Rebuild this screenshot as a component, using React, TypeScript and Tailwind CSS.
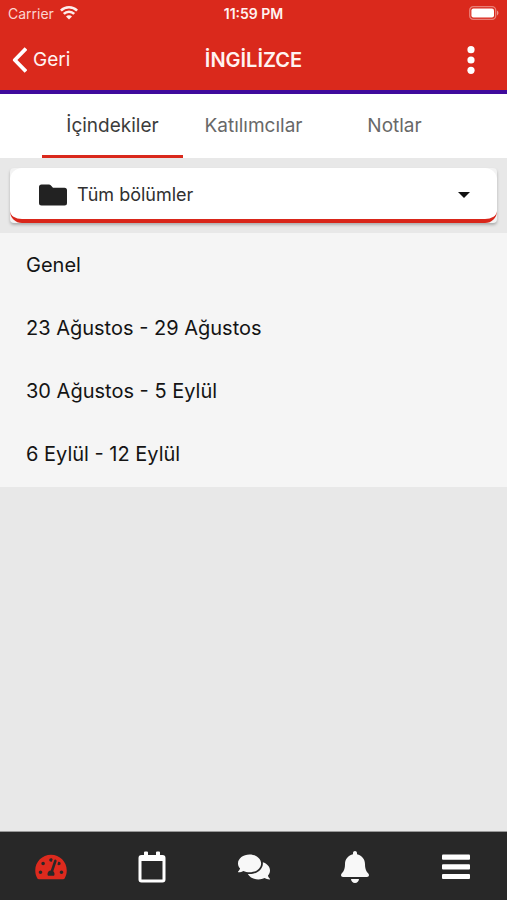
import { FaBell, FaComments, FaTachometerAlt } from "react-icons/fa";

const tabs = ["İçindekiler", "Katılımcılar", "Notlar"];

const sections = [
  "Genel",
  "23 Ağustos - 29 Ağustos",
  "30 Ağustos - 5 Eylül",
  "6 Eylül - 12 Eylül",
];

function WifiIcon() {
  return (
    <svg width="18" height="14" viewBox="0 0 18 14" fill="none" stroke="#fdeeec" strokeWidth="2.6" aria-hidden="true">
      <path d="M0.9 4.6a11.6 11.6 0 0 1 16.2 0" />
      <path d="M3.8 7.9a7.4 7.4 0 0 1 10.4 0" />
      <path d="M9 13.4 6 10.400a4.200 4.200 0 0 1 6 0Z" fill="#fdeeec" stroke="none" />
    </svg>
  );
}

function BatteryIcon() {
  return (
    <svg width="30" height="14" viewBox="0 0 30 14" aria-hidden="true">
      <rect x="0.7" y="0.7" width="26" height="12.6" rx="3.6" fill="none" stroke="#fff" strokeOpacity="0.4" strokeWidth="1.3" />
      <rect x="2.4" y="2.4" width="22.6" height="9.2" rx="2" fill="#fff" />
      <path d="M28 4.6c1.9.7 1.9 4.1 0 4.8Z" fill="#fff" fillOpacity="0.5" />
    </svg>
  );
}

function CalendarIcon() {
  return (
    <svg width="28" height="32" viewBox="0 0 28 32" fill="#fff" aria-hidden="true">
      <path
        fillRule="evenodd"
        d="M6 1.5Q6 .5 7 .5h2q1 0 1 1V4h8V1.5q0-1 1-1h2q1 0 1 1V4h2.5Q27.5 4 27.5 7v21.500q0 3-3 3h-21q-3 0-3-3V7q0-3 3-3H6ZM3.500 10v18.500h21V10Z"
      />
    </svg>
  );
}

const navItems = [
  { label: "Ana sayfa", icon: <FaTachometerAlt className="h-7 w-8 text-[#dd2a1e]" /> },
  { label: "Takvim", icon: <CalendarIcon /> },
  { label: "Mesajlar", icon: <FaComments className="h-8 w-8" /> },
  { label: "Bildirimler", icon: <FaBell className="h-8 w-7" /> },
  {
    label: "Menü",
    icon: (
      <svg width="28" height="26" viewBox="0 0 28 26" fill="#fff" aria-hidden="true">
        <rect y="0.500" width="28" height="5.200" rx="1" />
        <rect y="10.200" width="28" height="5.200" rx="1" />
        <rect y="19.900" width="28" height="5.200" rx="1" />
      </svg>
    ),
  },
];

export default function App() {
  return (
    <div className="flex min-h-screen flex-col bg-[#e8e8e8] font-['Inter','Liberation_Sans',sans-serif]">
      <header className="border-b-4 border-[#3f0a9c] bg-[#da291c] text-[#fff3f1]">
        <div className="grid h-7 grid-cols-3 items-center px-2 pb-0.5 text-[14px]">
          <div className="flex items-center gap-1.5 text-[#fbd5d1]">
            <span>Carrier</span>
            <WifiIcon />
          </div>
          <span className="text-center font-semibold">11:59 PM</span>
          <div className="flex justify-end">
            <BatteryIcon />
          </div>
        </div>
        <div className="grid h-[62px] grid-cols-3 items-center px-3 pt-0.5">
          <button type="button" className="flex items-center gap-1.5 text-[19px]">
            <svg width="15" height="26" viewBox="0 0 15 26" fill="none" stroke="#fff" strokeWidth="3.800" aria-hidden="true">
              <path d="M14 1.500 2.800 13 14 24.500" strokeLinejoin="round" />
            </svg>
            Geri
          </button>
          <h1 className="text-center text-[20px] font-semibold">İNGİLİZCE</h1>
          <button type="button" aria-label="Diğer seçenekler" className="flex justify-self-end px-5">
            <svg width="8" height="28" viewBox="0 0 8 28" fill="#fff" aria-hidden="true">
              <circle cx="4" cy="3.700" r="3.600" />
              <circle cx="4" cy="14" r="3.600" />
              <circle cx="4" cy="24.300" r="3.600" />
            </svg>
          </button>
        </div>
      </header>

      <nav aria-label="Kurs" className="flex h-16 shrink-0 justify-center bg-white">
        {tabs.map((tab, index) => (
          <button
            key={tab}
            type="button"
            className={
              index === 0
                ? "w-[141px] border-b-[3px] border-[#da291c] pt-1 text-[19px] text-[#3c3c3c]"
                : "w-[141px] border-b-[3px] border-transparent pt-1 text-[19px] text-[#686868]"
            }
          >
            {tab}
          </button>
        ))}
      </nav>

      <main className="flex-1">
        <div className="p-2.5">
          <div className="rounded-sm bg-[#f3f3f3] shadow-[0_2px_3px_#00000040]">
            <div className="relative flex h-[55px] items-center rounded-xl border-b-4 border-[#d9261a] bg-white pt-0.5">
              <svg className="pointer-events-none absolute left-[29px]" width="28" height="22" viewBox="0 0 28 22" fill="#222" aria-hidden="true">
                <path d="M0 3Q0 .5 2.500 .5H10q1 0 1.700.8L14 3.800h11.500Q28 3.800 28 6.300V19q0 2.500-2.500 2.500h-23Q0 21.500 0 19Z" />
              </svg>
              <select
                aria-label="Bölüm"
                className="h-full w-full appearance-none rounded-xl bg-transparent pr-12 pl-[67px] text-[18px] text-[#303030]"
              >
                <option>Tüm bölümler</option>
              </select>
              <svg className="pointer-events-none absolute right-[27px]" width="12" height="6" viewBox="0 0 12 6" fill="#111" aria-hidden="true">
                <path d="M0 0h12L6 6Z" />
              </svg>
            </div>
          </div>
        </div>

        <ul className="bg-[#f5f5f5] pb-0.5 text-[20px] text-[#141414]">
          {sections.map((section) => (
            <li key={section}>
              <button type="button" className="h-[63px] w-full px-[26px] text-left">
                {section}
              </button>
            </li>
          ))}
        </ul>
      </main>

      <nav aria-label="Ana gezinme" className="flex h-[69px] shrink-0 border-t border-[#999] bg-[#282828] text-[#f8f8f8]">
        {navItems.map((item) => (
          <button key={item.label} type="button" aria-label={item.label} className="flex flex-1 items-center justify-center pt-0.5">
            {item.icon}
          </button>
        ))}
      </nav>
    </div>
  );
}
